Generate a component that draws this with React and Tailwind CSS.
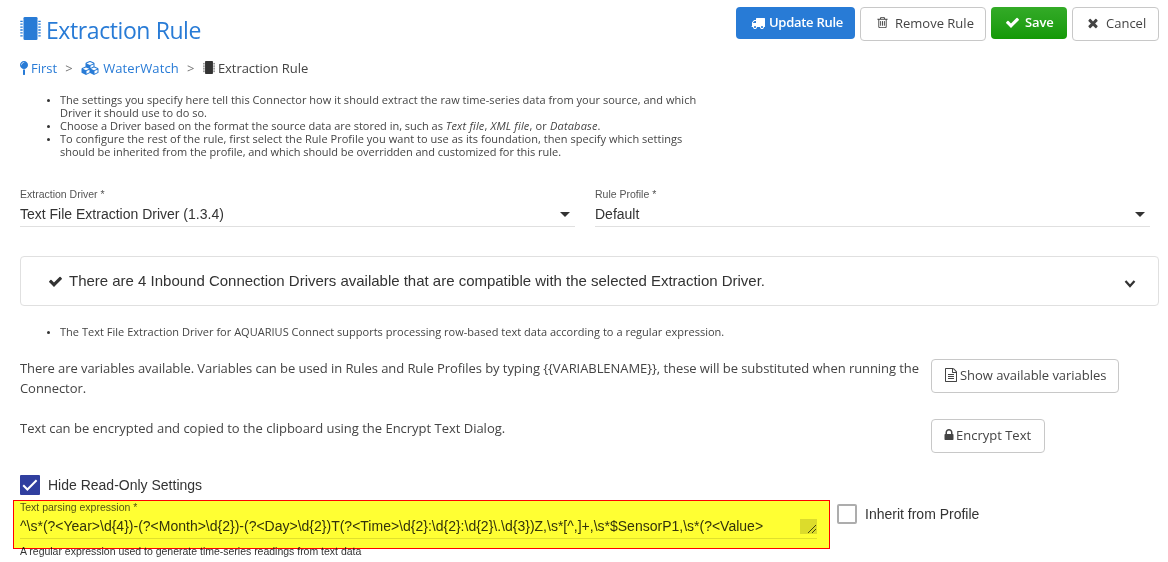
import React from "react";

const SANS = "font-['Open_Sans',sans-serif]";
const ARIAL = "font-['Liberation_Sans',Arial,sans-serif]";

const PATHS = {
  check: "M1671 566q0 40-28 68l-724 724-136 136q-28 28-68 28t-68-28l-136-136-362-362q-28-28-28-68t28-68l136-136q28-28 68-28t68 28l294 295 656-657q28-28 68-28t68 28l136 136q28 28 28 68z",
  times: "M1490 1322q0 40-28 68l-136 136q-28 28-68 28t-68-28l-294-294-294 294q-28 28-68 28t-68-28l-136-136q-28-28-28-68t28-68l294-294-294-294q-28-28-28-68t28-68l136-136q28-28 68-28t68 28l294 294 294-294q28-28 68-28t68 28l136 136q28 28 28 68t-28 68l-294 294 294 294q28 28 28 68z",
  lock: "M640 768h512v-192q0-106-75-181t-181-75-181 75-75 181v192zm832 96v576q0 40-28 68t-68 28h-960q-40 0-68-28t-28-68v-576q0-40 28-68t68-28h32v-192q0-184 132-316t316-132 316 132 132 316v192h32q40 0 68 28t28 68z",
  trash: "M704 736v576q0 14-9 23t-23 9h-64q-14 0-23-9t-9-23v-576q0-14 9-23t23-9h64q14 0 23 9t9 23zm256 0v576q0 14-9 23t-23 9h-64q-14 0-23-9t-9-23v-576q0-14 9-23t23-9h64q14 0 23 9t9 23zm256 0v576q0 14-9 23t-23 9h-64q-14 0-23-9t-9-23v-576q0-14 9-23t23-9h64q14 0 23 9t9 23zm128 724v-948h-896v948q0 22 7 40.5t14.5 27 10.5 8.5h832q3 0 10.5-8.5t14.5-27 7-40.5zm-672-1076h448l-48-117q-7-9-17-11h-317q-10 2-17 11zm928 32v64q0 14-9 23t-23 9h-96v948q0 83-47 143.5t-113 60.5h-832q-66 0-113-58.5t-47-141.5v-952h-96q-14 0-23-9t-9-23v-64q0-14 9-23t23-9h309l70-167q15-37 54-63t79-26h320q40 0 79 26t54 63l70 167h309q14 0 23 9t9 23z",
  file: "M1596 380q28 28 48 76t20 88v1152q0 40-28 68t-68 28h-1344q-40 0-68-28t-28-68v-1600q0-40 28-68t68-28h896q40 0 88 20t76 48zm-444-244v376h376q-10-29-22-41l-313-313q-12-12-41-22zm384 1528v-1024h-416q-40 0-68-28t-28-68v-416h-768v1536h1280zm-1024-864q0-14 9-23t23-9h704q14 0 23 9t9 23v64q0 14-9 23t-23 9h-704q-14 0-23-9t-9-23v-64zm736 224q14 0 23 9t9 23v64q0 14-9 23t-23 9h-704q-14 0-23-9t-9-23v-64q0-14 9-23t23-9h704zm0 256q14 0 23 9t9 23v64q0 14-9 23t-23 9h-704q-14 0-23-9t-9-23v-64q0-14 9-23t23-9h704z",
  truck: "M640 1408q0-52-38-90t-90-38-90 38-38 90 38 90 90 38 90-38 38-90zm-384-512h384v-256h-158q-13 0-22 9l-195 195q-9 9-9 22v30zm1280 512q0-52-38-90t-90-38-90 38-38 90 38 90 90 38 90-38 38-90zm256-1088v1024q0 15-4 26.5t-13.5 18.5-16.5 11.5-23.5 6-22.5 2-25.5 0-22.5-.5q0 106-75 181t-181 75-181-75-75-181h-384q0 106-75 181t-181 75-181-75-75-181h-64q-3 0-22.5.5t-25.5 0-22.5-2-23.5-6-16.5-11.5-13.5-18.5-4-26.5q0-26 19-45t45-19v-320q0-8-.5-35t0-38 2.5-34.5 6.5-37 14-30.5 22.5-30l198-198q19-19 50.5-32t58.5-13h160v-192q0-26 19-45t45-19h1024q26 0 45 19t19 45z",
  pin: "M896 1088q66 0 128-15v655q0 26-19 45t-45 19h-128q-26 0-45-19t-19-45v-655q62 15 128 15zm0-1088q212 0 362 150t150 362-150 362-362 150-362-150-150-362 150-362 362-150zm0 224q14 0 23-9t9-23-9-23-23-9q-146 0-249 103t-103 249q0 14 9 23t23 9 23-9 9-23q0-119 84.5-203.5t203.5-84.5z",
  cubes: "M512 1629l384-192v-314l-384 164v342zm-64-454l404-173-404-173-404 173zm1088 454l384-192v-314l-384 164v342zm-64-454l404-173-404-173-404 173zm-448-293l384-165v-266l-384 164v267zm-64-379l441-189-441-189-441 189zm1088 518v416q0 36-19 67t-52 47l-448 224q-25 14-57 14t-57-14l-448-224q-4-2-7-4-2 2-7 4l-448 224q-25 14-57 14t-57-14l-448-224q-33-16-52-47t-19-67v-416q0-38 21.5-70t56.5-48l434-186v-400q0-38 21.5-70t56.5-48l448-192q23-10 50-10t50 10l448 192q35 16 56.5 48t21.5 70v400l434 186q36 16 57 48t21 70z",
};

function Icon({ name, className, viewBox = "0 0 1792 1792" }) {
  return (
    <svg viewBox={viewBox} fill="currentColor" className={`shrink-0 ${className}`}>
      <path d={PATHS[name]} />
    </svg>
  );
}

function Chip({ className }) {
  return (
    <svg viewBox="0 0 21 23" fill="currentColor" className={`shrink-0 ${className}`}>
      <rect x="3.500" y="0" width="14" height="23" rx="1.300" />
      <path
        d="M.3 4.300h2.400M.3 7.200h2.400M.3 10.100h2.400M.3 13h2.400M.3 15.900h2.400M.3 18.800h2.400M18.300 4.300h2.400M18.300 7.200h2.400M18.300 10.100h2.400M18.300 13h2.400M18.300 15.900h2.400M18.300 18.800h2.400"
        stroke="currentColor"
        strokeWidth="1.300"
      />
    </svg>
  );
}

function OutlineButton({ className, children }) {
  return (
    <button className={`flex h-[34px] items-center rounded-[4px] border border-[#c8c8c8] bg-white text-[#444] ${className}`}>
      {children}
    </button>
  );
}

function Bullet({ children }) {
  return (
    <li className="flex">
      <svg viewBox="0 0 3 3" className="ml-[-13px] mr-[10px] mt-[6px] size-[3px] shrink-0 fill-[#333]">
        <circle cx="1.5" cy="1.5" r="1.5" />
      </svg>
      <div>{children}</div>
    </li>
  );
}

function Select({ label, value }) {
  return (
    <div className={`h-[41px] flex-1 border-b border-[#e0e0e0] ${ARIAL}`}>
      <div className="h-[18px] pt-px text-[10.5px] leading-[14px] text-[#555]">{label}</div>
      <div className="flex h-[20px] items-center justify-between pr-[5px] text-[14px] leading-[20px] text-[#333]">
        <span>{value}</span>
        <svg viewBox="0 0 10 5" className="h-[5px] w-[10px] fill-[#333]">
          <path d="M0 0h10L5 5z" />
        </svg>
      </div>
    </div>
  );
}

export default function App() {
  return (
    <div className={`relative h-[562px] w-[1168px] overflow-hidden bg-white pl-5 text-[13px] text-[#444] ${SANS}`}>
      <header className="flex h-[57px] justify-between pr-[9px] pt-[7px]">
        <h1 className="flex h-[46px] items-center text-[23px] leading-[46px] tracking-[-0.41px] text-[#287bd6]">
          <Chip className="-mt-[3px] mr-[5px] h-[23px] w-[21px]" />
          Extraction Rule
        </h1>
        <div className="flex">
          <button className="flex h-8 w-[119px] items-center rounded-[4px] bg-[#287bd6] pl-[15px] font-semibold tracking-[-0.28px] text-white">
            <Icon name="truck" className="mr-[4px] size-[14px]" />
            <span className="-mt-px">Update Rule</span>
          </button>
          <OutlineButton className="ml-[5px] w-[126px] pl-[15px]">
            <Icon name="trash" className="-mt-[3px] mr-[6px] size-[13px]" />
            Remove Rule
          </OutlineButton>
          <button className="ml-[5px] flex h-8 w-[76px] items-center rounded-[4px] bg-linear-to-b from-[#33ab27] to-[#139905] pl-[14px] font-semibold tracking-[-0.1px] text-white">
            <Icon name="check" className="-mt-[2px] mr-[5px] size-[15px]" />
            <span className="-mt-px">Save</span>
          </button>
          <OutlineButton className="ml-[5px] w-[87px] pl-[13px]">
            <Icon name="times" className="-mt-[2px] mr-[6px] size-[14px]" />
            Cancel
          </OutlineButton>
        </div>
      </header>

      <nav className="flex h-[22px] items-center leading-[22px] text-[#287bd6]">
        <Icon name="pin" viewBox="384 0 1024 1792" className="mr-[3px] h-[14px] w-2" />
        <span>First</span>
        <span className="ml-[8px] w-[16px] text-[13px] text-[#777]">&gt;</span>
        <Icon name="cubes" viewBox="-192 0 2304 1792" className="mr-[4px] h-[14px] w-[18px]" />
        <span className="tracking-[0.12px]">WaterWatch</span>
        <span className="ml-[8px] w-[16px] text-[13px] text-[#777]">&gt;</span>
        <Chip className="-mt-0.5 mr-[3px] h-[13px] w-[12px] text-[#333]" />
        <span className="tracking-[-0.05px] text-[#444]">Extraction Rule</span>
      </nav>

      <ul className="mt-[14px] h-[93px] pl-10 text-[11px] leading-[13px] text-[#444]">
        <Bullet>
          <span className="tracking-[0.035px]">The settings you specify here tell this Connector how it should extract the raw time-series data from your source, and which</span>
          <br />
          Driver it should use to do so.
        </Bullet>
        <Bullet>
          <span className="tracking-[-0.015px]">Choose a Driver based on the format the source data are stored in, such as </span>
          <span className="tracking-[0.17px]">
            <i>Text file</i>, <i>XML file</i>, or <i>Database</i>.
          </span>
        </Bullet>
        <Bullet>
          <span className="tracking-[0.035px]">To configure the rest of the rule, first select the Rule Profile you want to use as its foundation, then specify which settings</span>
          <br />
          <span className="tracking-[-0.03px]">should be inherited from the profile, and which should be overridden and customized for this rule.</span>
        </Bullet>
      </ul>

      <div className="flex gap-5 pr-[18px]">
        <Select label="Extraction Driver *" value="Text File Extraction Driver (1.3.4)" />
        <Select label="Rule Profile *" value="Default" />
      </div>

      <div className={`mr-[9px] mt-[29px] flex h-[50px] items-center rounded-[4px] border border-[#e0e0e0] pl-[27px] pr-[22px] text-[15px] text-[#333] ${ARIAL}`}>
        <Icon name="check" className="mr-[6px] size-[15px]" />
        <span className="tracking-[-0.01px]">There are 4 Inbound Connection Drivers available that are compatible with the selected Extraction Driver.</span>
        <svg viewBox="0 0 12 8" className="ml-auto mt-1.5 h-2 w-3 fill-none stroke-[#333] stroke-[2.2]">
          <path d="M1.500 1l4.500 5L10.500 1" />
        </svg>
      </div>

      <ul className="mt-[19px] h-[34px] pl-10 text-[11px] leading-[13px] tracking-[0.02px]">
        <Bullet>The Text File Extraction Driver for AQUARIUS Connect supports processing row-based text data according to a regular expression.</Bullet>
      </ul>

      <div className="flex h-[60px]">
        <p className="-mt-px w-[911px] leading-[20px] tracking-[-0.066px]">
          There are variables available. Variables can be used in Rules and Rule Profiles by typing {"{{VARIABLENAME}}"}, these will be substituted when running the
          <br />
          Connector.
        </p>
        <OutlineButton className="w-[188px] pl-[12px]">
          <Icon name="file" className="-mt-[2px] mr-[2px] size-[14px]" />
          <span className="tracking-[-0.04px]">Show available variables</span>
        </OutlineButton>
      </div>
      <div className="flex h-[60px]">
        <p className="-mt-px w-[911px] leading-[20px] tracking-[-0.015px]">Text can be encrypted and copied to the clipboard using the Encrypt Text Dialog.</p>
        <OutlineButton className="w-[114px] pl-[10px]">
          <Icon name="lock" className="-mt-[2px] mr-0 size-[14px]" />
          Encrypt Text
        </OutlineButton>
      </div>

      <div className={`-mt-[6px] flex h-[24px] items-center text-[14px] text-[#333] ${ARIAL}`}>
        <span className="mr-2 flex size-5 items-center justify-center rounded-[1px] bg-[#303f9f]">
          <svg viewBox="0 0 20 20" className="size-5 fill-none stroke-white stroke-2">
            <path d="M3.200 10.200l4.200 4.300 9.200-9.300" />
          </svg>
        </span>
        Hide Read-Only Settings
      </div>

      <div className={`mt-[3px] flex ${ARIAL}`}>
        <div className="w-[797px] text-[#333]">
          <div className="h-[15px] text-[10.5px] leading-[15px] text-[#555]">Text parsing expression *</div>
          <div className="flex h-[24px] items-start justify-between border-b border-[#e0e0e0] text-[14px] leading-[22px]">
            <span>{"^\\s*(?<Year>\\d{4})-(?<Month>\\d{2})-(?<Day>\\d{2})T(?<Time>\\d{2}:\\d{2}:\\d{2}\\.\\d{3})Z,\\s*[^,]+,\\s*$SensorP1,\\s*(?<Value>"}</span>
            <svg viewBox="0 0 17 15" className="mt-[4px] h-[15px] w-[17px] bg-[#dcdcdc] fill-none stroke-[#444] stroke-1">
              <path d="M8 14l8-8M12 14l4-4" />
            </svg>
          </div>
          <div className="mt-[5px] text-[10.5px] leading-[15px] tracking-[-0.01px]">A regular expression used to generate time-series readings from text data</div>
        </div>
        <div className="ml-5 mt-[4px] flex h-5 items-center gap-2 text-[14px] text-[#333]">
          <span className="size-5 shrink-0 rounded-[2px] border-2 border-[#adadad]" />
          <span>Inherit from Profile</span>
        </div>
      </div>

      <div className="absolute left-[13px] top-[500px] h-[49px] w-[817px] border border-[#f00] bg-[#ff3] mix-blend-multiply" />
    </div>
  );
}
